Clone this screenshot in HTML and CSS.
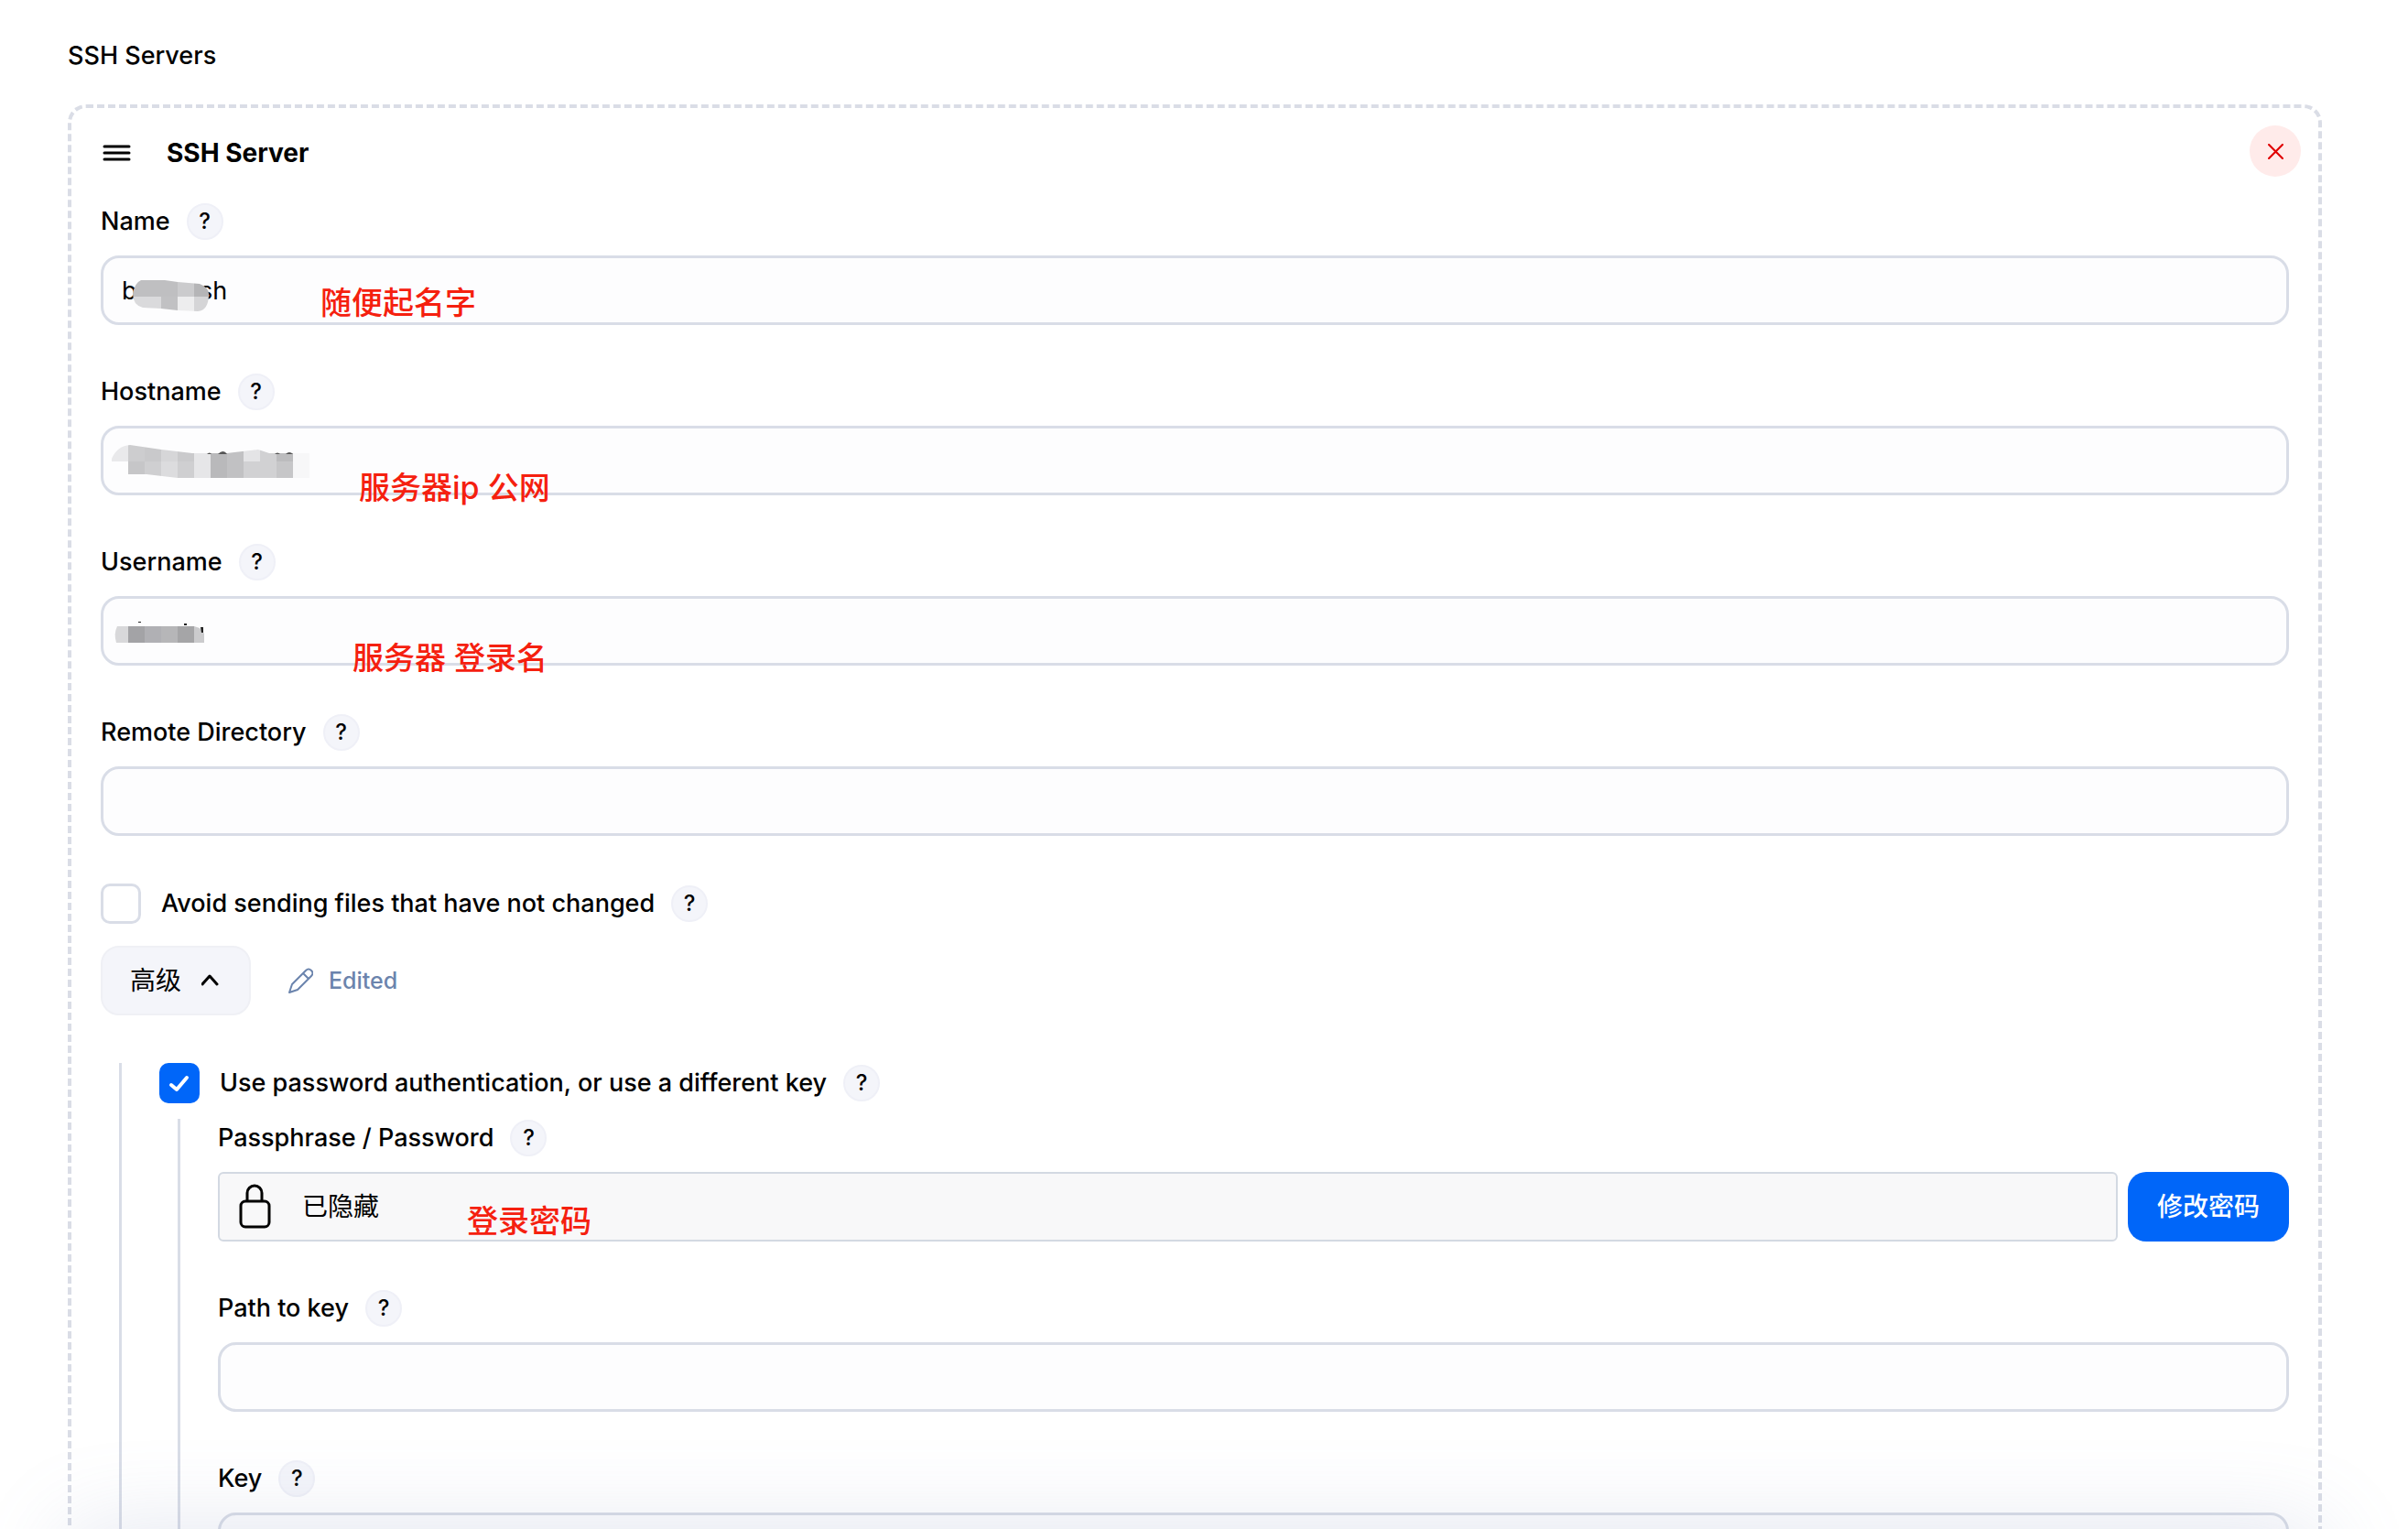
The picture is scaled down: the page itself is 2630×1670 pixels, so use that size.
FILE: index.html
```html
<!DOCTYPE html>
<html lang="zh-CN">
<head>
    <meta charset="UTF-8">
    <meta name="viewport" content="width=device-width, initial-scale=1.0">
    <title>SSH Servers</title>
    <link rel="stylesheet" href="styles.css">
</head>
<body>
    <main class="page">
        <h1 class="section-title">SSH Servers</h1>

        <section class="card">
            <div class="card-header">
                <svg class="drag-icon" viewBox="0 0 40 40" fill="none" stroke="currentColor" stroke-width="3" stroke-linecap="round">
                    <path d="M4 13h27M4 20h27M4 27h27"/>
                </svg>
                <h2>SSH Server</h2>
                <button type="button" class="remove" aria-label="Remove">
                    <svg viewBox="0 0 16 16" fill="none" stroke="currentColor" stroke-width="2" stroke-linecap="round">
                        <path d="M1 1l14 14M15 1L1 15"/>
                    </svg>
                </button>
            </div>

            <div class="field">
                <div class="field-label">
                    <label for="name">Name</label>
                    <button type="button" class="help">?</button>
                </div>
                <div class="control">
                    <input type="text" id="name" value="b&nbsp;&nbsp;&nbsp;&nbsp;&nbsp;&nbsp;&nbsp;&nbsp;&nbsp;sh">
                    <svg class="mosaic" viewBox="0 0 240 76">
                        <clipPath id="blur-name">
                            <path d="M44 27H70L84 29 108 31Q118 35 118 42Q118 60 106 61L84 60 66 58 46 57Q35 54 35 42Q37 30 44 27z"/>
                        </clipPath>
                        <g clip-path="url(#blur-name)">
                            <path fill="#bfbfc1" d="M34 26h50v19H34z"/>
                            <path fill="#cbcbcd" d="M84 26h18v19H84z"/>
                            <path fill="#b5b5b7" d="M102 26h18v19h-18z"/>
                            <path fill="#dadadc" d="M34 45h32v18H34z"/>
                            <path fill="#c1c1c3" d="M66 45h18v18H66z"/>
                            <path fill="#ededee" d="M84 45h18v18H84z"/>
                            <path fill="#d5d5d7" d="M102 45h18v18h-18z"/>
                        </g>
                    </svg>
                    <span class="note note-name">随便起名字</span>
                </div>
            </div>

            <div class="field">
                <div class="field-label">
                    <label for="hostname">Hostname</label>
                    <button type="button" class="help">?</button>
                </div>
                <div class="control">
                    <input type="text" id="hostname">
                    <svg class="mosaic" viewBox="0 0 240 76">
                        <clipPath id="blur-host">
                            <path d="M12 36Q18 22 32 21L66 26 100 30H138L172 26 184 30H230V57H84L50 53H30V39H12z"/>
                        </clipPath>
                        <g clip-path="url(#blur-host)">
                            <path fill="#e9e9eb" d="M12 20h18v19H12z"/>
                            <path fill="#cdcdcf" d="M30 20h18v19H30z"/>
                            <path fill="#c9c9cb" d="M48 20h18v19H48z"/>
                            <path fill="#d6d6d8" d="M66 20h18v19H66z"/>
                            <path fill="#cacacc" d="M84 20h18v19H84z"/>
                            <path fill="#e6e6e8" d="M102 20h18v38h-18z"/>
                            <path fill="#b9b9bb" d="M120 20h18v38h-18z"/>
                            <path fill="#c1c1c3" d="M138 20h18v38h-18z"/>
                            <path fill="#e4e4e6" d="M156 20h18v19h-18z"/>
                            <path fill="#d1d1d3" d="M174 20h18v38h-18zM156 39h18v19h-18z"/>
                            <path fill="#bcbcbe" d="M192 20h18v19h-18z"/>
                            <path fill="#c6c6c8" d="M192 39h18v19h-18zM30 39h18v19H30z"/>
                            <path fill="#f7f7f8" d="M210 20h18v38h-18z"/>
                            <path fill="#cfcfd1" d="M48 39h18v19H48zM84 39h18v19H84z"/>
                            <path fill="#dcdcde" d="M66 39h18v19H66z"/>
                        </g>
                        <path fill="#555" d="M116 31q3-3 5 0zM128 31q6-6 10 0zM190 31q3-3 6 0zM202 31q4-4 8 0z"/>
                    </svg>
                    <span class="note note-host">服务器ip 公网</span>
                </div>
            </div>

            <div class="field">
                <div class="field-label">
                    <label for="username">Username</label>
                    <button type="button" class="help">?</button>
                </div>
                <div class="control">
                    <input type="text" id="username">
                    <svg class="mosaic" viewBox="0 0 240 76">
                        <path fill="#d8d8da" d="M18 33h12v18H17q-3-10 1-18z"/>
                        <path fill="#a3a3a6" d="M30 33h18v18H30z"/>
                        <path fill="#b0b0b4" d="M48 33h18v18H48z"/>
                        <path fill="#b6b6b8" d="M66 33h18v18H66z"/>
                        <path fill="#a5a5a7" d="M84 33h18v18H84z"/>
                        <path fill="#cbcbcd" d="M102 33l6 2 5 6v10h-11z"/>
                        <path fill="#222" d="M109 34h3v6h-2zM91 30h3v2h-3zM41 28h3v1h-3z"/>
                    </svg>
                    <span class="note note-user">服务器 登录名</span>
                </div>
            </div>

            <div class="field">
                <div class="field-label">
                    <label for="remote">Remote Directory</label>
                    <button type="button" class="help">?</button>
                </div>
                <input type="text" id="remote">
            </div>

            <div class="check-row">
                <input type="checkbox" id="avoid">
                <label for="avoid">Avoid sending files that have not changed</label>
                <button type="button" class="help">?</button>
            </div>

            <div class="advanced-row">
                <button type="button" class="advanced">
                    高级
                    <svg viewBox="0 0 20 20" fill="none" stroke="currentColor" stroke-width="3" stroke-linecap="round" stroke-linejoin="round">
                        <path d="M1 14l8-9 8 9"/>
                    </svg>
                </button>
                <span class="edited">
                    <svg viewBox="0 0 28 28" fill="none" stroke="currentColor" stroke-width="2" stroke-linejoin="round">
                        <path d="M2 27l3-9L20 3q3-3 6 0t0 6L11 24zM17 6l6 6"/>
                    </svg>
                    Edited
                </span>
            </div>

            <div class="nested outer">
                <div class="check-row">
                    <input type="checkbox" id="use-password" checked>
                    <label for="use-password">Use password authentication, or use a different key</label>
                    <button type="button" class="help">?</button>
                </div>

                <div class="nested inner">
                    <div class="field">
                        <div class="field-label">
                            <span>Passphrase / Password</span>
                            <button type="button" class="help">?</button>
                        </div>
                        <div class="password-row">
                            <div class="concealed">
                                <svg viewBox="0 0 36 52" fill="none" stroke="currentColor" stroke-width="3">
                                    <rect x="3" y="20" width="31" height="28" rx="5"/>
                                    <path d="M10 20V11a8 8 0 0 1 16 0v9"/>
                                </svg>
                                <span>已隐藏</span>
                                <span class="note note-pass">登录密码</span>
                            </div>
                            <button type="button" class="change">修改密码</button>
                        </div>
                    </div>

                    <div class="field">
                        <div class="field-label">
                            <label for="key-path">Path to key</label>
                            <button type="button" class="help">?</button>
                        </div>
                        <input type="text" id="key-path">
                    </div>

                    <div class="field">
                        <div class="field-label">
                            <label for="key">Key</label>
                            <button type="button" class="help">?</button>
                        </div>
                        <textarea id="key" rows="5"></textarea>
                    </div>
                </div>
            </div>
        </section>
    </main>
    <div class="bottom-bar"></div>
</body>
</html>
```
FILE: styles.css
```css
* {
    box-sizing: border-box;
}
body {
    margin: 0;
    height: 100vh;
    overflow: hidden;
    background: #fff;
    color: #000;
    font-family: Inter, "Noto Sans CJK SC", sans-serif;
    font-size: 27px;
    font-weight: 500;
    line-height: 40px;
}
.page {
    padding: 41px 94px 0 74px;
}
h1, h2 {
    margin: 0;
}
.section-title {
    margin-bottom: 33px;
    font-size: 27px;
    font-weight: 500;
}
.card {
    border: 4px dashed #dadde6;
    border-radius: 20px;
    padding: 23px 32px 32px;
}
.card-header {
    display: flex;
    align-items: center;
    margin-right: -13px;
    margin-bottom: 29px;
}
.card-header h2 {
    margin-left: 32px;
    font-size: 28px;
    font-weight: 700;
}
.drag-icon {
    width: 40px;
    height: 40px;
}
button {
    font: inherit;
    color: inherit;
    border: none;
    padding: 0;
    cursor: pointer;
}
.remove {
    display: flex;
    align-items: center;
    justify-content: center;
    width: 56px;
    height: 56px;
    margin-top: -4px;
    margin-left: auto;
    border-radius: 50%;
    background: #ffebea;
    color: #e00000;
}
.remove svg {
    width: 17px;
    height: 17px;
}
.field {
    margin-bottom: 53px;
}
.field-label {
    display: flex;
    align-items: center;
    gap: 18px;
    margin-bottom: 17px;
}
.help {
    width: 40px;
    height: 40px;
    border: 2px solid #eff0f7;
    border-radius: 50%;
    background: #f4f5fa;
    font-size: 24px;
    line-height: 36px;
}
.control {
    position: relative;
}
input[type="text"],
textarea {
    display: block;
    width: 100%;
    padding: 0 20px;
    border: 3px solid #d9dde7;
    border-radius: 20px;
    background: #fdfdfe;
    font: inherit;
    font-weight: 400;
    color: inherit;
}
input[type="text"] {
    height: 76px;
}
/* Red remarks lying over the fields */
.note {
    position: absolute;
    color: #f5200f;
    font-size: 34px;
    font-weight: 500;
    white-space: nowrap;
}
.note-name {
    left: 240px;
    top: 32px;
}
.note-host {
    left: 282px;
    top: 48px;
}
.note-user {
    left: 275px;
    top: 48px;
}
.note-pass {
    left: 270px;
    top: 32px;
}
.mosaic {
    position: absolute;
    left: 0;
    top: 0;
    width: 240px;
    height: 76px;
    pointer-events: none;
}
.check-row {
    display: flex;
    align-items: center;
    gap: 18px;
}
.field + .check-row {
    margin-top: -1px;
}
.check-row label {
    margin-left: 4px;
}
input[type="checkbox"] {
    appearance: none;
    width: 44px;
    height: 44px;
    margin: 0;
    border: 3px solid #d9dde7;
    border-radius: 10px;
    background: #fff;
}
input[type="checkbox"]:checked {
    border: none;
    background: #0066f9 url("data:image/svg+xml,%3Csvg xmlns='http://www.w3.org/2000/svg' viewBox='0 0 44 44' fill='none' stroke='white' stroke-width='4' stroke-linecap='round' stroke-linejoin='round'%3E%3Cpath d='M13 24l6 5L30 16'/%3E%3C/svg%3E");
}
.advanced-row {
    display: flex;
    align-items: center;
    gap: 40px;
    margin-top: 24px;
}
.advanced {
    display: flex;
    align-items: center;
    gap: 22px;
    height: 76px;
    padding: 0 32px 0 30px;
    border: 2px solid #eff0f5;
    border-radius: 20px;
    background: #f4f5fa;
    font-size: 28px;
    font-weight: 400;
}
.advanced svg {
    width: 20px;
    height: 20px;
}
.edited {
    display: flex;
    align-items: center;
    gap: 17px;
    color: #6b84ad;
    font-size: 25px;
}
.edited svg {
    width: 28px;
    height: 28px;
}
.nested {
    border-left: 3px solid #d9dde7;
}
.outer {
    margin: 52px 0 0 20px;
    padding-left: 41px;
}
.inner {
    margin: 17px 0 0 20px;
    padding: 1px 0 0 41px;
}
.password-row {
    display: flex;
    gap: 11px;
}
.concealed {
    position: relative;
    flex: 1;
    display: flex;
    align-items: center;
    gap: 34px;
    height: 76px;
    padding-left: 20px;
    border: 2px solid #d3d9e2;
    border-radius: 6px;
    background: #f8f8f9;
    font-size: 28px;
    font-weight: 400;
}
.concealed svg {
    width: 36px;
    height: 52px;
}
.change {
    height: 76px;
    padding: 0 32px;
    border-radius: 20px;
    background: #0066f9;
    color: #fff;
    font-size: 28px;
}
/* Bar docked under the window edge, only its shadow shows */
.bottom-bar {
    position: fixed;
    left: 74px;
    right: 94px;
    bottom: -120px;
    height: 120px;
    box-shadow: 0 0 100px rgba(120, 135, 180, 0.2);
    pointer-events: none;
}
```
